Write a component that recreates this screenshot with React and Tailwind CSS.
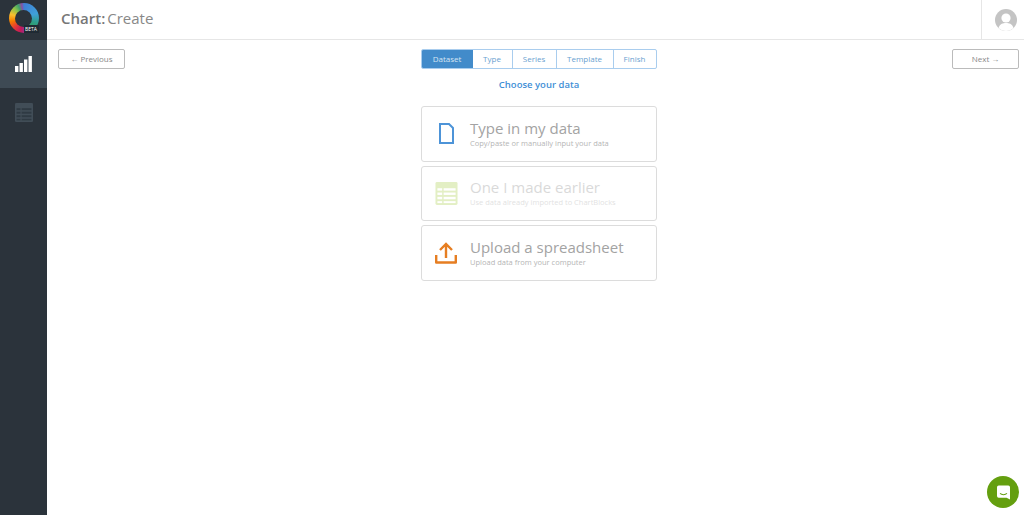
import React from "react";

const TABS = ["Dataset", "Type", "Series", "Template", "Finish"];

function TableIcon({ className, fill, line }) {
  return (
    <svg viewBox="0 0 23 24" className={className}>
      <rect x="0" y="0" width="23" height="24" rx="1.5" fill={fill} />
      <g fill={line}>
        <rect x="2" y="6.5" width="5" height="2.5" />
        <rect x="8.5" y="6.5" width="12.5" height="2.5" />
        <rect x="2" y="11" width="5" height="2.5" />
        <rect x="8.5" y="11" width="12.5" height="2.5" />
        <rect x="2" y="15.5" width="5" height="2.5" />
        <rect x="8.5" y="15.5" width="12.5" height="2.5" />
        <rect x="2" y="20" width="5" height="2" />
        <rect x="8.5" y="20" width="12.5" height="2" />
      </g>
    </svg>
  );
}

function Card({ icon, title, sub, faded }) {
  return (
    <div className="flex h-[55.5px] items-center rounded-[3px] border border-[#dcdcdc] bg-white">
      <div className="flex w-[48px] shrink-0 justify-center">{icon}</div>
      <div className={faded ? "opacity-40" : ""}>
        <div className="text-[15px] leading-[19px] text-[#a3a3a3]">{title}</div>
        <div className="text-[7.5px] leading-[11px] text-[#b5b5b5]">{sub}</div>
      </div>
    </div>
  );
}

export default function App() {
  return (
    <div className="relative flex h-[515px] w-[1024px] overflow-hidden bg-white font-['Open_Sans',sans-serif]">
      {/* Sidebar */}
      <div className="flex w-[47px] shrink-0 flex-col bg-[#2b333b]">
        <div className="flex h-[40px] justify-center pt-[3px]">
          <div className="relative h-[30px] w-[30px]">
            <div className="h-full w-full rounded-full bg-[conic-gradient(#3f7fd6_0deg,#3f9fd8_70deg,#2e9e8b_110deg,#2e9e6b_135deg,#7b3fa3_165deg,#c2185b_195deg,#e53935_225deg,#f57c00_255deg,#fbc02d_285deg,#8bc34a_315deg,#3fa36b_335deg,#8a4fa3_350deg,#3f7fd6_360deg)]" />
            <div className="absolute left-[6.5px] top-[6.5px] h-[17px] w-[17px] rounded-full bg-[#2b333b]" />
            <div className="absolute bottom-0 right-0 w-[15px] bg-[#1f2a33] text-center text-[5px] leading-[8px] text-white">BETA</div>
          </div>
        </div>
        <div className="flex h-[48px] items-center justify-center bg-[#3e4a54]">
          <svg viewBox="0 0 17 16" className="h-[16px] w-[17px]" fill="#fff">
            <rect x="0" y="10" width="3.4" height="6" />
            <rect x="4.5" y="7" width="3.4" height="9" />
            <rect x="9" y="3.5" width="3.4" height="12.5" />
            <rect x="13.5" y="0" width="3.4" height="16" />
          </svg>
        </div>
        <div className="flex h-[48px] items-center justify-center">
          <TableIcon className="h-[19px] w-[18px]" fill="#414d57" line="#2f3a43" />
        </div>
      </div>

      {/* Main */}
      <div className="min-w-0 flex-1">
        <div className="flex h-[40px] items-stretch justify-between border-b border-[#e6e6e6]">
          <div className="flex items-center pb-[3px] pl-[14px] text-[15px] text-[#888]">
            <span className="font-semibold text-[#777]">Chart:</span>
            <span className="ml-[2px]">Create</span>
          </div>
          <div className="flex w-[43px] items-center justify-end border-l border-[#e6e6e6] pr-[7px]">
            <svg viewBox="0 0 22 22" className="h-[22px] w-[22px]">
              <circle cx="11" cy="11" r="11" fill="#c4c4c4" />
              <circle cx="11" cy="9" r="4.6" fill="#fff" />
              <path d="M3.5 19 C5 14.5 8 14 11 14 C14 14 17 14.5 18.5 19 C16.5 21 14 22 11 22 C8 22 5.5 21 3.5 19 Z" fill="#fff" />
            </svg>
          </div>
        </div>

        <div className="flex items-start justify-between pl-[11px] pr-[5px] pt-[9px]">
          <button className="h-[20px] w-[67px] rounded-[2px] border border-[#bbb] text-[8px] leading-none text-[#888]">← Previous</button>
          <div className="flex h-[20px] w-[236px] overflow-hidden rounded-[2px] border border-[#a9cdee] text-[8px] text-[#6a9fd0]">
            {TABS.map((t, i) => (
              <div
                key={t}
                className={
                  i === 0
                    ? "flex w-[51px] items-center justify-center bg-[#428bca] text-[#d5e5f3]"
                    : t === "Type"
                      ? "flex w-[40px] items-center justify-center border-r border-[#a9cdee]"
                      : t === "Series"
                        ? "flex w-[44px] items-center justify-center border-r border-[#a9cdee]"
                        : t === "Template"
                          ? "flex w-[57px] items-center justify-center border-r border-[#a9cdee]"
                          : "flex flex-1 items-center justify-center"
                }
              >
                {t}
              </div>
            ))}
          </div>
          <button className="h-[20px] w-[67px] rounded-[2px] border border-[#bbb] text-[8px] leading-none text-[#888]">Next →</button>
        </div>

        <div className="ml-[374px] w-[236px]">
          <div className="mt-[9px] h-[14px] text-center text-[9.5px] font-semibold leading-[14px] text-[#3f8fd6]">Choose your data</div>
          <div className="mt-[14px] flex flex-col gap-[4px]">
            <Card
              title="Type in my data"
              sub="Copy/paste or manually input your data"
              icon={
                <svg viewBox="0 0 15 21" className="h-[21px] w-[15px]" fill="none" stroke="#4d94d8" strokeWidth="2">
                  <path d="M1 1 H10 L14 5 V20 H1 Z" />
                </svg>
              }
            />
            <Card
              faded
              title="One I made earlier"
              sub="Use data already imported to ChartBlocks"
              icon={<TableIcon className="h-[23px] w-[23px]" fill="#e3efc4" line="#fff" />}
            />
            <Card
              title="Upload a spreadsheet"
              sub="Upload data from your computer"
              icon={
                <svg viewBox="0 0 22 22" className="h-[22px] w-[22px]" fill="none" stroke="#e67e22" strokeWidth="2.4">
                  <path d="M11 16 V2 M5 8 L11 2 L17 8" />
                  <path d="M1.2 13 V20.5 H20.8 V13" strokeLinejoin="round" />
                </svg>
              }
            />
          </div>
        </div>
      </div>

      {/* Chat launcher */}
      <div className="absolute bottom-[7px] right-[5px] flex h-[32px] w-[32px] items-center justify-center rounded-full bg-[#649f0f]">
        <svg viewBox="0 0 15 16" className="h-[15px] w-[13px]">
          <path d="M2 0 H13 A2 2 0 0 1 15 2 V16 L11 14 H2 A2 2 0 0 1 0 12 V2 A2 2 0 0 1 2 0 Z" fill="#fff" />
          <path d="M3.5 9 C5.5 11 9.5 11 11.5 9" fill="none" stroke="#649f0f" strokeWidth="1.2" />
        </svg>
      </div>
    </div>
  );
}
